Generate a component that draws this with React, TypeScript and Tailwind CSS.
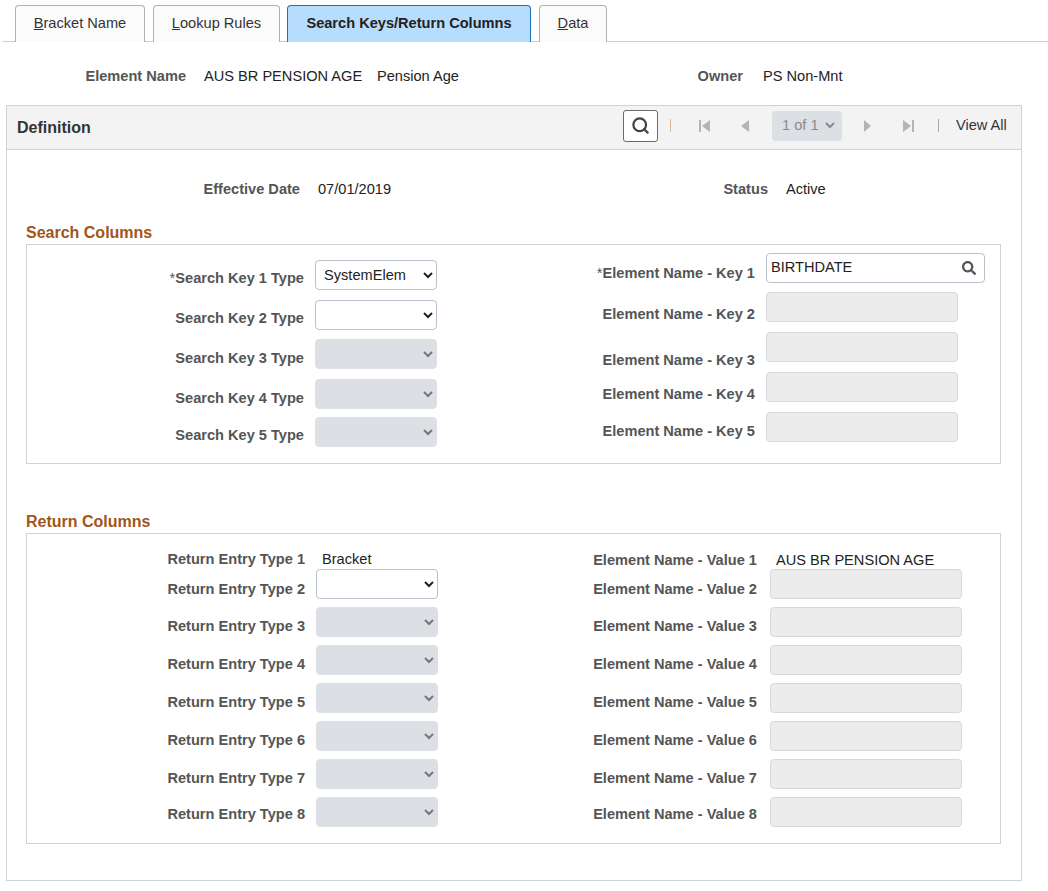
import { Search } from 'lucide-react';
import { FaSearch } from 'react-icons/fa';

function Tab({ first, rest, left, active, width }: { first?: string; rest: string; left: number; active?: boolean; width: number }) {
  return (
    <div
      style={{ width, marginLeft: left }}
      className={
        active
          ? 'h-[37px] -mb-px flex items-center justify-center rounded-t-[4px] border border-b-0 border-[#1e6fc4] bg-[#b8dcfb] pb-[1px] text-[14.6px] font-bold text-[#222]'
          : 'h-[37px] -mb-px flex items-center justify-center rounded-t-[4px] border border-b-0 border-[#b0b0b0] bg-[#fbfbfb] pb-[1px] text-[14.6px] text-[#333]'
      }
    >
      {first && <span className="underline">{first}</span>}
      {rest}
    </div>
  );
}

function Label({ children, w, req }: { children: string; w: number; req?: boolean }) {
  return (
    <div style={{ width: w }} className="text-right text-[14.6px] leading-[18px] font-bold text-[#555] whitespace-nowrap">
      {req && <span className="font-normal">*</span>}
      {children}
    </div>
  );
}

function Sel({ value, disabled }: { value?: string; disabled?: boolean }) {
  return (
    <select
      disabled={disabled}
      defaultValue={value ?? ''}
      className={
        disabled
          ? 'block h-[30px] w-[122px] rounded-[4px] border border-[#dcdfe3] bg-[#dcdfe3] pl-[5px] text-[14.6px] text-[#777]'
          : 'block h-[30px] w-[122px] rounded-[4px] border border-[#b9c2cc] bg-white pl-[4px] text-[14.6px] text-[#222]'
      }
    >
      <option value=""></option>
      {value && <option value={value}>{value}</option>}
    </select>
  );
}

function Disabled() {
  return <div className="h-[30px] w-[192px] rounded-[4px] border border-[#d5d9de] bg-[#ececec]" />;
}

// row heights and label offsets are uneven in the original form, so they are kept as data
const searchLeft = [
  { label: 'Search Key 1 Type', height: 40, pad: 9, req: true, value: 'SystemElem' },
  { label: 'Search Key 2 Type', height: 39, pad: 9 },
  { label: 'Search Key 3 Type', height: 40, pad: 10, disabled: true },
  { label: 'Search Key 4 Type', height: 38, pad: 10, disabled: true },
  { label: 'Search Key 5 Type', height: 30, pad: 9, disabled: true },
];

const searchRight = [
  { label: 'Element Name - Key 2', height: 40, pad: 13 },
  { label: 'Element Name - Key 3', height: 40, pad: 19 },
  { label: 'Element Name - Key 4', height: 40, pad: 13 },
  { label: 'Element Name - Key 5', height: 30, pad: 10 },
];

const returnRows = [
  { n: 2, pad: 11 },
  { n: 3, pad: 10 },
  { n: 4, pad: 10 },
  { n: 5, pad: 10 },
  { n: 6, pad: 10 },
  { n: 7, pad: 10 },
  { n: 8, pad: 8 },
];

function PagerIcon({ d, w = 12 }: { d: string; w?: number }) {
  return (
    <svg width={w} height="14" viewBox={`0 0 ${w} 14`} className="fill-[#b4b4b4]">
      <path d={d} />
    </svg>
  );
}

export default function App() {
  return (
    <div className='h-[891px] w-[1048px] overflow-hidden bg-white font-["Liberation_Sans",Arial,sans-serif] text-[14.6px] text-[#222]'>
      {/* Tabs */}
      <div className="ml-[2px] flex h-[42px] items-end border-b border-[#cfcfcf] pt-[5px]">
        <Tab first="B" rest="racket Name" left={13} width={130} />
        <Tab first="L" rest="ookup Rules" left={8} width={127} />
        <Tab rest="Search Keys/Return Columns" left={7} width={244} active />
        <Tab first="D" rest="ata" left={8} width={68} />
      </div>

      {/* Element name row */}
      <div className="flex h-[63px] items-center pt-[5px] leading-[18px]">
        <div className="w-[186px] text-right font-bold text-[#555]">Element Name</div>
        <div className="ml-[18px] w-[173px]">AUS BR PENSION AGE</div>
        <div className="w-[283px]">Pension Age</div>
        <div className="w-[83px] text-right font-bold text-[#555]">Owner</div>
        <div className="ml-[20px]">PS Non-Mnt</div>
      </div>

      {/* Definition panel */}
      <div className="ml-[6px] h-[776px] w-[1016px] border border-[#cdd3da]">
        <div className="flex h-[44px] items-center border-b border-[#cdd3da] bg-[#f3f3f3]">
          <div className="ml-[10px] w-[606px] text-[16px] font-bold text-[#333]">Definition</div>
          <div className="flex items-center pb-[4px]">
            <button className="flex h-[32px] w-[35px] items-center justify-center rounded-[3px] border border-[#6b6b6b] bg-white">
              <Search size={19} strokeWidth={2.8} className="text-[#444]" />
            </button>
            <div className="ml-[12px] h-[13px] w-px bg-[#d9b899]" />
            <div className="ml-[28px]">
              <PagerIcon d="M0 1h2v12H0zM11 1v12L3 7z" />
            </div>
            <div className="ml-[29px]">
              <PagerIcon w={10} d="M9 1v12L1 7z" />
            </div>
            <div className="ml-[22px] flex h-[30px] w-[70px] items-center rounded-[4px] bg-[#dcdfe3] pl-[10px] text-[#8a8a8a]">
              1 of 1
              <svg width="10" height="7" viewBox="0 0 10 7" className="ml-[6px] fill-none stroke-[#8a8a8a] stroke-2">
                <path d="M1 1l4 4 4-4" />
              </svg>
            </div>
            <div className="ml-[21px]">
              <PagerIcon w={9} d="M1 1v12l7-6z" />
            </div>
            <div className="ml-[31px]">
              <PagerIcon d="M0 1v12l8-6zM9 1h2v12H9z" />
            </div>
            <div className="ml-[23px] h-[13px] w-px bg-[#aaa]" />
            <div className="ml-[17px] whitespace-nowrap text-[#333]">View All</div>
          </div>
        </div>

        <div className="flex h-[74px] items-center pt-[4px] leading-[18px]">
          <div className="w-[293px] text-right font-bold text-[#555]">Effective Date</div>
          <div className="ml-[18px] w-[401px]">07/01/2019</div>
          <div className="w-[49px] text-right font-bold text-[#555] whitespace-nowrap">Status</div>
          <div className="ml-[18px]">Active</div>
        </div>

        {/* Search Columns */}
        <div className="ml-[19px] text-[16px] font-bold leading-[18px] text-[#a0561a]">Search Columns</div>
        <div className="ml-[19px] mt-[2px] flex h-[220px] w-[975px] border border-[#cdd3da]">
          <div className="pt-[15px]">
            {searchLeft.map((r) => (
              <div key={r.label} style={{ height: r.height }} className="flex items-start">
                <div style={{ paddingTop: r.pad }}>
                  <Label w={277} req={r.req}>{r.label}</Label>
                </div>
                <div className="ml-[11px]">
                  <Sel value={r.value} disabled={r.disabled} />
                </div>
              </div>
            ))}
          </div>
          <div className="pt-[8px]">
            <div className="flex h-[39px] items-start">
              <div className="pt-[11px]">
                <Label w={318} req>Element Name - Key 1</Label>
              </div>
              <div className="ml-[11px] flex h-[30px] w-[219px] items-center rounded-[4px] border border-[#b9c2cc] bg-white pl-[4px] pr-[8px]">
                <span className="flex-1">BIRTHDATE</span>
                <FaSearch size={14} className="text-[#555]" />
              </div>
            </div>
            {searchRight.map((r) => (
              <div key={r.label} style={{ height: r.height }} className="flex items-start">
                <div style={{ paddingTop: r.pad }}>
                  <Label w={318}>{r.label}</Label>
                </div>
                <div className="ml-[11px]">
                  <Disabled />
                </div>
              </div>
            ))}
          </div>
        </div>

        {/* Return Columns */}
        <div className="ml-[19px] mt-[49px] text-[16px] font-bold leading-[18px] text-[#a0561a]">Return Columns</div>
        <div className="ml-[19px] mt-[2px] h-[311px] w-[975px] border border-[#cdd3da] pt-[16px]">
          <div className="flex h-[19px] items-start">
            <Label w={278}>Return Entry Type 1</Label>
            <div className="ml-[17px] w-[240px] leading-[18px]">Bracket</div>
            <div className="pt-[1px]">
              <Label w={195}>Element Name - Value 1</Label>
            </div>
            <div className="ml-[19px] whitespace-nowrap pt-[1px] leading-[18px]">AUS BR PENSION AGE</div>
          </div>
          {returnRows.map(({ n, pad }) => (
            <div key={n} className="flex h-[38px] items-start">
              <div style={{ paddingTop: pad }}>
                <Label w={278}>{`Return Entry Type ${n}`}</Label>
              </div>
              <div className="ml-[11px]">
                <Sel disabled={n > 2} />
              </div>
              <div style={{ paddingTop: pad }}>
                <Label w={319}>{`Element Name - Value ${n}`}</Label>
              </div>
              <div className="ml-[13px]">
                <Disabled />
              </div>
            </div>
          ))}
        </div>
      </div>
    </div>
  );
}
